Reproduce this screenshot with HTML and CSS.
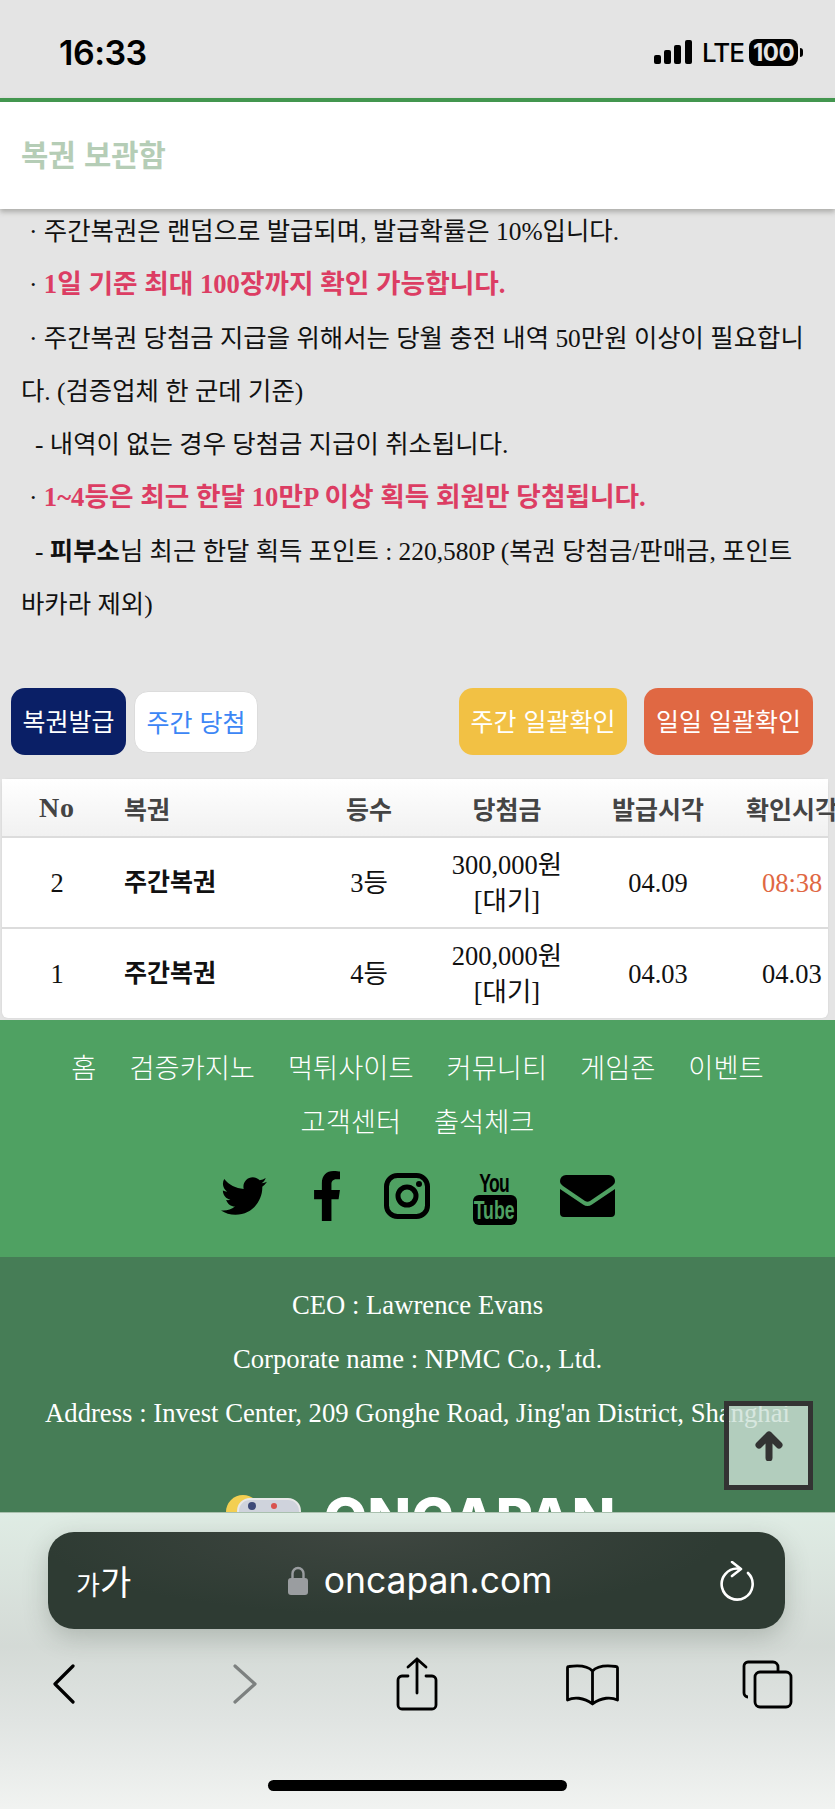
FILE: index.html
```html
<!DOCTYPE html>
<html lang="ko">
<head>
    <meta charset="UTF-8">
    <meta name="viewport" content="width=device-width, initial-scale=1.0">
    <title>복권 보관함</title>
    <link rel="stylesheet" href="styles.css">
</head>
<body>

<div class="status-bar">
    <span class="clock">16:33</span>
    <div class="status-icons">
        <svg class="signal" viewBox="0 0 38 24" width="38" height="24">
            <rect x="0" y="15" width="7" height="9" rx="2"/>
            <rect x="10" y="10" width="7" height="14" rx="2"/>
            <rect x="20" y="5" width="7" height="19" rx="2"/>
            <rect x="31" y="0" width="7" height="24" rx="2"/>
        </svg>
        <span class="lte">LTE</span>
        <span class="battery">100</span>
        <span class="battery-nub"></span>
    </div>
</div>

<header class="page-head">
    <h1>복권 보관함</h1>
</header>

<div class="notice">
    <p class="indent-dot">· 주간복권은 랜덤으로 발급되며, 발급확률은 10%입니다.</p>
    <p class="indent-dot">· <strong class="red">1일 기준 최대 100장까지 확인 가능합니다.</strong></p>
    <p class="indent-dot">· 주간복권 당첨금 지급을 위해서는 당월 충전 내역 50만원 이상이 필요합니다. (검증업체 한 군데 기준)</p>
    <p class="indent-dash">- 내역이 없는 경우 당첨금 지급이 취소됩니다.</p>
    <p class="indent-dot">· <strong class="red">1~4등은 최근 한달 10만P 이상 획득 회원만 당첨됩니다.</strong></p>
    <p class="indent-dash">- <strong>피부소</strong>님 최근 한달 획득 포인트 : 220,580P (복권 당첨금/판매금, 포인트 바카라 제외)</p>
</div>

<div class="actions">
    <div class="btn-group">
        <a class="btn btn-navy">복권발급</a>
        <a class="btn btn-white">주간 당첨</a>
    </div>
    <div class="btn-group btn-group-right">
        <a class="btn btn-yellow">주간 일괄확인</a>
        <a class="btn btn-orange">일일 일괄확인</a>
    </div>
</div>

<div class="table-box">
    <table class="lotto-table">
        <colgroup>
            <col class="col-no">
            <col class="col-name">
            <col class="col-rank">
            <col class="col-prize">
            <col class="col-issued">
            <col class="col-checked">
        </colgroup>
        <thead>
            <tr>
                <th class="head-no">No</th>
                <th class="cell-name">복권</th>
                <th>등수</th>
                <th>당첨금</th>
                <th>발급시각</th>
                <th class="cell-last">확인시각</th>
            </tr>
        </thead>
        <tbody>
            <tr>
                <td>2</td>
                <td class="cell-name"><strong>주간복권</strong></td>
                <td>3등</td>
                <td>300,000원<br>[대기]</td>
                <td>04.09</td>
                <td class="cell-last time-new">08:38</td>
            </tr>
            <tr>
                <td>1</td>
                <td class="cell-name"><strong>주간복권</strong></td>
                <td>4등</td>
                <td>200,000원<br>[대기]</td>
                <td>04.03</td>
                <td class="cell-last">04.03</td>
            </tr>
        </tbody>
    </table>
</div>

<footer>
    <div class="foot-top">
        <nav class="foot-nav">
            <a>홈</a>
            <a>검증카지노</a>
            <a>먹튀사이트</a>
            <a>커뮤니티</a>
            <a>게임존</a>
            <a>이벤트</a>
            <a>고객센터</a>
            <a>출석체크</a>
        </nav>
        <div class="social">
            <svg class="ico-twitter" viewBox="0 0 512 512"><path d="M459.37 151.716c.325 4.548.325 9.097.325 13.645 0 138.72-105.583 298.558-298.558 298.558-59.452 0-114.68-17.219-161.137-47.106 8.447.974 16.568 1.299 25.34 1.299 49.055 0 94.213-16.568 130.274-44.832-46.132-.975-84.792-31.188-98.112-72.772 6.498.974 12.995 1.624 19.818 1.624 9.421 0 18.843-1.3 27.614-3.573-48.081-9.747-84.143-51.98-84.143-102.985v-1.299c13.969 7.797 30.214 12.67 47.431 13.319-28.264-18.843-46.781-51.005-46.781-87.391 0-19.492 5.197-37.36 14.294-52.954 51.655 63.675 129.3 105.258 216.365 109.807-1.624-7.797-2.599-15.918-2.599-24.04 0-57.828 46.782-104.934 104.934-104.934 30.213 0 57.502 12.67 76.67 33.137 23.715-4.548 46.456-13.32 66.599-25.34-7.798 24.366-24.366 44.833-46.132 57.827 21.117-2.273 41.584-8.122 60.426-16.243-14.292 20.791-32.161 39.308-52.628 54.253z"/></svg>
            <svg class="ico-facebook" viewBox="22 0 272 512" preserveAspectRatio="none"><path d="M279.14 288l14.22-92.66h-88.91v-60.13c0-25.35 12.42-50.06 52.24-50.06h40.42V6.26S260.43 0 225.36 0c-73.22 0-121.08 44.38-121.08 124.72v70.62H22.89V288h81.39v224h100.17V288z"/></svg>
            <svg class="ico-insta" viewBox="0 0 46 46">
                <rect x="2.500" y="2.500" width="41" height="41" rx="11" fill="none" stroke="#000" stroke-width="5"/>
                <circle cx="23" cy="23" r="9" fill="none" stroke="#000" stroke-width="5"/>
                <circle cx="35" cy="11" r="3"/>
            </svg>
            <div class="ico-youtube">
                <span class="yt-you">You</span>
                <div class="yt-box"><span class="yt-tube">Tube</span></div>
            </div>
            <svg class="ico-mail" viewBox="0 0 55 42">
                <path d="M6 0h43a6 6 0 0 1 6 6c0 2-1 3.500-3 5L30 26a5 5 0 0 1-5 0L3 11C1 9.500 0 8 0 6a6 6 0 0 1 6-6z"/>
                <path d="M0 14l23 15.500a8 8 0 0 0 9 0L55 14v24a4 4 0 0 1-4 4H4a4 4 0 0 1-4-4z"/>
            </svg>
        </div>
    </div>
    <div class="foot-info">
        <p>CEO : Lawrence Evans</p>
        <p>Corporate name : NPMC Co., Ltd.</p>
        <p>Address : Invest Center, 209 Gonghe Road, Jing'an District, Shanghai</p>
        <div class="logo">
            <svg class="logo-mark" viewBox="0 0 78 40" width="78" height="40">
                <circle cx="17" cy="20" r="17" fill="#f3cf52"/>
                <rect x="12" y="7" width="62" height="33" rx="12" fill="#cfd3dc" stroke="#e8e8e8" stroke-width="2"/>
                <circle cx="26" cy="14" r="4" fill="#3d4a78"/>
                <circle cx="48" cy="14" r="3" fill="#d9534f"/>
            </svg>
            <span class="logo-text">ONCAPAN</span>
        </div>
    </div>
</footer>

<a class="to-top">
    <svg viewBox="0 0 30 30" width="30" height="30">
        <path d="M15 4v23M5 14L15 4l10 10" fill="none" stroke="#333" stroke-width="7" stroke-linecap="round" stroke-linejoin="round"/>
    </svg>
</a>

<div class="safari">
    <div class="url-bar">
        <span class="aa"><small>가</small>가</span>
        <div class="url">
            <svg viewBox="0 0 20 29" width="20" height="29">
                <path d="M4.500 13V7.500a5.500 5.500 0 0 1 11 0V13" fill="none" stroke="#9a9da0" stroke-width="2.400"/>
                <rect x="0" y="12" width="20" height="17" rx="3" fill="#9a9da0"/>
            </svg>
            <span>oncapan.com</span>
        </div>
        <svg class="reload" viewBox="0 0 34 40" width="34" height="40">
            <path d="M18 7.600A15.500 15.500 0 1 0 28 12" fill="none" stroke="#fff" stroke-width="2.600" stroke-linecap="round"/>
            <path d="M12 1l9 7-9 7" fill="none" stroke="#fff" stroke-width="2.600" stroke-linecap="round" stroke-linejoin="round"/>
        </svg>
    </div>
    <div class="toolbar">
        <svg viewBox="0 0 23 40" width="23" height="40"><path d="M21 2L3 20l18 18" fill="none" stroke="#000" stroke-width="3.200" stroke-linecap="round" stroke-linejoin="round"/></svg>
        <svg class="tool-forward" viewBox="0 0 24 40" width="24" height="40"><path d="M2 2l20 18L2 38" fill="none" stroke="#7d8180" stroke-width="3.200" stroke-linecap="round" stroke-linejoin="round"/></svg>
        <svg class="tool-share" viewBox="0 0 42 54" width="42" height="54"><path d="M12 19H6a4 4 0 0 0-4 4v25a4 4 0 0 0 4 4h30a4 4 0 0 0 4-4V23a4 4 0 0 0-4-4h-6M21 36V2M12 10l9-8 9 8" fill="none" stroke="#000" stroke-width="2.800" stroke-linecap="round" stroke-linejoin="round"/></svg>
        <svg class="tool-book" viewBox="0 0 53 43" width="53" height="43"><path d="M26.500 8C22 3 14 2 3 3.500a1.500 1.500 0 0 0-1.500 1.500v32c6-3 16-3 25 4 9-7 19-7 25-4V5A1.500 1.500 0 0 0 50 3.500C39 2 31 3 26.500 8zM26.500 8v32" fill="none" stroke="#000" stroke-width="2.800" stroke-linejoin="round"/></svg>
        <svg class="tool-tabs" viewBox="0 0 51 49" width="51" height="49"><path d="M6 37a4 4 0 0 1-4-4V6a4 4 0 0 1 4-4h25a5 5 0 0 1 5 5v4" fill="none" stroke="#000" stroke-width="2.800"/><rect x="13" y="12" width="36" height="35" rx="5" fill="none" stroke="#000" stroke-width="2.800"/></svg>
    </div>
    <div class="home-bar"></div>
</div>

</body>
</html>
```

FILE: styles.css
```css
html, body {
    margin: 0;
    padding: 0;
}

body {
    position: relative;
    width: 835px;
    height: 1809px;
    overflow: hidden;
    background-color: #e4e4e4;
    font-family: "Liberation Serif", "Noto Sans CJK KR", serif;
    font-size: 25.400px;
    color: #111;
}

/* status bar */
.status-bar {
    height: 98px;
    box-sizing: border-box;
    padding: 6px 32px 0 59px;
    display: flex;
    align-items: center;
    justify-content: space-between;
    font-family: Inter, "Noto Sans", sans-serif;
    color: #000;
}

.clock {
    font-size: 34px;
    font-weight: 600;
    letter-spacing: -0.5px;
}

.status-icons {
    display: flex;
    align-items: center;
}

.signal {
    margin-right: 10px;
}

.lte {
    width: 47px;
    font-size: 26px;
    font-weight: 500;
    letter-spacing: -1px;
}

.battery {
    width: 49px;
    height: 27px;
    line-height: 27px;
    background-color: #000;
    border-radius: 8px;
    color: #e4e4e4;
    font-size: 24px;
    font-weight: 700;
    text-align: center;
    letter-spacing: -0.5px;
}

.battery-nub {
    width: 3px;
    height: 9px;
    margin-left: 2px;
    background-color: #000;
    border-radius: 0 3px 3px 0;
}

/* title */
.page-head {
    position: relative;
    z-index: 2;
    height: 111px;
    box-sizing: border-box;
    border-top: 4px solid #43964f;
    background-color: #fff;
    box-shadow: 0 3px 5px rgba(70, 70, 60, 0.35);
    padding: 0 21px 4px;
    display: flex;
    align-items: center;
}

.page-head h1 {
    margin: 0;
    font-family: "Noto Sans CJK KR", sans-serif;
    font-size: 29.700px;
    font-weight: 700;
    color: #b5cdb6;
}

/* notice text */
.notice {
    margin-top: -4px;
    padding: 0 24px 0 21px;
    line-height: 53.3px;
}

.notice p {
    margin: 0;
}

.indent-dot::before {
    content: "";
    display: inline-block;
    width: 8px;
}

.indent-dash::before {
    content: "";
    display: inline-block;
    width: 14px;
}

.red {
    color: #dc3d63;
    font-size: 26.700px;
}

/* buttons */
.actions {
    margin-top: 57px;
    padding: 0 22px 0 11px;
    display: flex;
    justify-content: space-between;
    align-items: center;
}

.btn-group {
    display: flex;
    align-items: center;
    gap: 8px;
}

.btn-group-right {
    gap: 17px;
}

.btn {
    height: 67px;
    line-height: 65px;
    box-sizing: border-box;
    border-radius: 14px;
    color: #fff;
    text-align: center;
    font-family: "Noto Sans CJK KR", sans-serif;
    font-size: 25px;
}

.btn-navy {
    width: 115px;
    background-color: #0a1f66;
}

.btn-white {
    width: 124px;
    height: 62px;
    line-height: 58px;
    background-color: #fff;
    border: 1px solid #dcdcdc;
    color: #3c86f5;
}

.btn-yellow {
    width: 168px;
    background-color: #f2c144;
}

.btn-orange {
    width: 169px;
    background-color: #e06843;
}

/* table */
.table-box {
    width: 826px;
    margin: 24px 0 0 2px;
    background-color: #fff;
    border-radius: 6px;
    box-shadow: 0 0 2px #cfcfcf;
}

.lotto-table {
    width: 826px;
    table-layout: fixed;
    border-collapse: collapse;
    text-align: center;
    font-size: 26.500px;
}

.col-no { width: 110px; }
.col-name { width: 194px; }
.col-rank { width: 126px; }
.col-prize { width: 150px; }
.col-issued { width: 152px; }
.col-checked { width: 94px; }

.lotto-table th {
    height: 57px;
    padding: 0;
    white-space: nowrap;
    border-bottom: 2px solid #dcdcdc;
    background: linear-gradient(#fff, #f1f1f1);
    color: #444;
    font-family: "Noto Sans CJK KR", sans-serif;
    font-size: 25px;
    font-weight: 700;
}

.lotto-table th.head-no {
    font-family: "Liberation Serif", serif;
    font-size: 28px;
    letter-spacing: 1px;
}

.lotto-table td {
    height: 89px;
    padding: 0;
    line-height: 36px;
    border-bottom: 2px solid #dcdcdc;
}

.lotto-table tbody tr:last-child td {
    border-bottom: none;
}

.lotto-table .cell-name {
    padding-left: 12px;
    text-align: left;
}

.lotto-table td strong {
    font-size: 25px;
}

.lotto-table th.cell-last {
    padding-left: 12px;
    text-align: left;
}

.lotto-table td.cell-last {
    padding-left: 28px;
    text-align: left;
}

.time-new {
    color: #e06843;
}

/* footer */
.foot-top {
    margin-top: 2px;
    height: 237px;
    box-sizing: border-box;
    padding: 19px 50px 0;
    background-color: #4fa162;
}

.foot-nav {
    display: flex;
    flex-wrap: wrap;
    justify-content: center;
    column-gap: 33px;
    line-height: 54px;
    font-family: "Noto Sans CJK KR", sans-serif;
    font-size: 27.300px;
    font-weight: 300;
    color: #fff;
}

.social {
    margin-top: 22px;
    display: flex;
    justify-content: center;
    align-items: center;
}

.ico-twitter {
    width: 46px;
    height: 46px;
    margin-right: 47px;
}

.ico-facebook {
    width: 26px;
    height: 50px;
    margin-right: 44px;
}

.ico-insta {
    width: 46px;
    height: 46px;
    margin-right: 43px;
}

.ico-youtube {
    width: 44px;
    height: 54px;
    margin-right: 43px;
    display: flex;
    flex-direction: column;
    align-items: center;
    font-family: "Liberation Sans", sans-serif;
    font-weight: 700;
    transform: translateY(2px);
}

.yt-you {
    height: 24px;
    line-height: 24px;
    font-size: 25px;
    letter-spacing: -1px;
    transform: scaleX(0.7);
    color: #000;
}

.yt-box {
    width: 44px;
    height: 30px;
    line-height: 30px;
    background-color: #000;
    border-radius: 6px;
    display: flex;
    justify-content: center;
}

.yt-tube {
    font-size: 26px;
    transform: scaleX(0.68);
    color: #4fa162;
}

.ico-mail {
    width: 55px;
    height: 42px;
}

.foot-info {
    height: 300px;
    box-sizing: border-box;
    padding-top: 21px;
    background-color: #467d56;
    color: #fff;
    text-align: center;
    font-size: 26.700px;
    line-height: 54px;
}

.foot-info p {
    margin: 0;
    white-space: nowrap;
}

.logo {
    margin: 50px 0 0 6px;
    display: flex;
    justify-content: center;
    align-items: flex-start;
    gap: 20px;
}

.logo-mark {
    margin-top: 2px;
}

.logo-text {
    line-height: 1;
    font-family: Inter, "Liberation Sans", sans-serif;
    font-size: 57px;
    font-weight: 800;
    color: #fff;
}

/* back to top button */
.to-top {
    position: absolute;
    left: 724px;
    top: 1401px;
    width: 89px;
    height: 89px;
    box-sizing: border-box;
    border: 5px solid #333;
    background-color: rgba(205, 225, 215, 0.8);
    display: flex;
    align-items: center;
    justify-content: center;
}

/* browser chrome */
.safari {
    position: absolute;
    left: 0;
    top: 1512px;
    width: 835px;
    height: 297px;
    box-sizing: border-box;
    padding-top: 19px;
    border-top: 1px solid #a9c0ae;
    background: linear-gradient(#dfece4, #d4dad6 45%, #e0e4e2 70%, #f1f3f1);
    font-family: Inter, "Noto Sans", sans-serif;
}

.url-bar {
    width: 737px;
    height: 97px;
    margin-left: 48px;
    box-sizing: border-box;
    padding: 0 31px 0 28px;
    display: flex;
    align-items: center;
    justify-content: space-between;
    background: radial-gradient(ellipse at 45% 0, #3e4640, #2e3b33 60%);
    border-radius: 26px;
    box-shadow: 0 8px 24px rgba(60, 70, 60, 0.25);
    color: #fff;
}

.aa {
    width: 60px;
    font-family: "Noto Sans CJK KR", sans-serif;
    font-size: 34px;
}

.aa small {
    font-size: 26px;
}

.url {
    display: flex;
    align-items: center;
    gap: 16px;
    font-size: 35.500px;
    margin-right: 16px;
}

.toolbar {
    margin-top: 28px;
    padding-left: 52px;
    display: flex;
    align-items: center;
}

.tool-forward {
    margin-left: 158px;
}

.tool-share {
    margin-left: 139px;
}

.tool-book {
    margin-left: 128px;
}

.tool-tabs {
    margin-left: 123px;
}

.home-bar {
    position: absolute;
    left: 268px;
    top: 267px;
    width: 299px;
    height: 11px;
    background-color: #000;
    border-radius: 6px;
}
```
